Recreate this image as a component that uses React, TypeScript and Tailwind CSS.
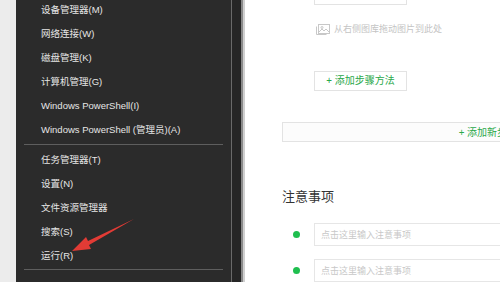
import React from "react";

const font = { fontFamily: '"Noto Sans", "Noto Sans CJK SC", sans-serif' };
const menuFont = { fontFamily: '"Liberation Sans", "Noto Sans CJK SC", sans-serif' };

function MenuItem({ label }: { label: string }) {
  return (
    <div className="h-6 flex items-center pl-[25px] text-[9.5px] text-[#e6e6e6] whitespace-nowrap" style={menuFont}>
      {label}
    </div>
  );
}

export default function App() {
  const top = [
    "设备管理器(M)",
    "网络连接(W)",
    "磁盘管理(K)",
    "计算机管理(G)",
    "Windows PowerShell(I)",
    "Windows PowerShell (管理员)(A)",
  ];
  const bottom = ["任务管理器(T)", "设置(N)", "文件资源管理器", "搜索(S)", "运行(R)"];
  return (
    <div className="relative w-[500px] h-[282px] overflow-hidden flex bg-white" style={font}>
      <div className="w-[16px] bg-[#ececec] shrink-0" />
      <div className="w-[215px] bg-[#2b2b2b] shrink-0 flex flex-col">
        <div className="-mt-[2px]">
          {top.map((t) => (
            <MenuItem key={t} label={t} />
          ))}
        </div>
        <div className="mt-[2px] mb-[3px] mx-[8px] h-px bg-[#5e5e5e]" />
        {bottom.map((t) => (
          <MenuItem key={t} label={t} />
        ))}
        <div className="mt-[1px] mx-[8px] h-px bg-[#5e5e5e]" />
      </div>
      <div className="w-px bg-[#6a6a6a] shrink-0" />
      <div className="w-[9px] bg-[#262626] shrink-0" />
      <div className="w-[2px] bg-[#8a8a8a] shrink-0" />
      <div className="w-[2px] bg-[#d0d0d0] shrink-0" />
      <div className="flex-1 bg-white flex flex-col pl-[37px]">
        <div className="ml-[32px] -mt-[15px] w-[93px] h-[21px] border border-[#e3e3e3]" />
        <div className="ml-[34px] mt-[17px] flex items-center gap-[4px] text-[9px] text-[#c4c4c4]">
          <svg width="14" height="11" viewBox="0 0 14 11" fill="none" stroke="#c8c8c8" strokeWidth="1">
            <rect x="2.5" y="0.5" width="11" height="9" />
            <path d="M0.5 2.5v8h10" />
            <circle cx="6" cy="3.5" r="1" />
            <path d="M3 8l3-3 2 2 2-2 3 3" />
          </svg>
          <span>从右侧图库拖动图片到此处</span>
        </div>
        <div className="ml-[32px] mt-[35px] w-[93px] h-[21px] border border-[#e3e3e3] flex items-center justify-center text-[10px] text-[#2aa84a]">
          + 添加步骤方法
        </div>
        <div className="mt-[31px] h-[21px] border border-[#e3e3e3] border-r-0 bg-[#fcfcfc] flex items-center justify-end text-[10px] text-[#2aa84a] whitespace-nowrap overflow-hidden">
          <span className="-mr-[7px]">+ 添加新步</span>
        </div>
        <div className="mt-[45px] text-[13px] text-[#333333]">注意事项</div>
        <div className="mt-[16px] flex items-center">
          <div className="w-[7px] h-[7px] rounded-full bg-[#1fbf4f] ml-[11px]" />
          <div className="ml-[14px] flex-1 h-[23px] border border-[#e6e6e6] border-r-0 flex items-center pl-[6px] text-[9px] text-[#c8c8c8]">
            点击这里输入注意事项
          </div>
        </div>
        <div className="mt-[13px] flex items-center">
          <div className="w-[7px] h-[7px] rounded-full bg-[#1fbf4f] ml-[11px]" />
          <div className="ml-[14px] flex-1 h-[23px] border border-[#e6e6e6] border-r-0 flex items-center pl-[6px] text-[9px] text-[#c8c8c8]">
            点击这里输入注意事项
          </div>
        </div>
      </div>
      <svg className="absolute left-0 top-0 pointer-events-none" width="500" height="282">
        <polygon points="134,219 88,241 86,237 72,251 91,249 89,245" fill="#e23b35" />
      </svg>
    </div>
  );
}
